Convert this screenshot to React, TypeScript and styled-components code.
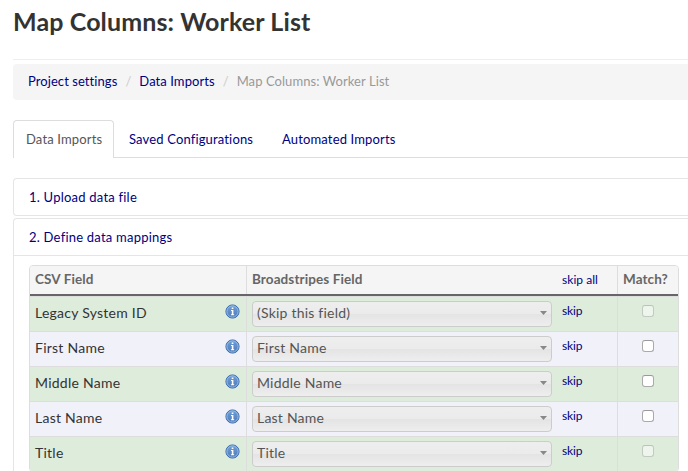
import React from "react";
import styled, { createGlobalStyle } from "styled-components";

const GlobalStyle = createGlobalStyle`
  * { box-sizing: border-box; }
  html, body { margin: 0; background: #fff; }
  body {
    width: 688px;
    height: 471px;
    overflow: hidden;
    color: #333;
    font: 13px/20px Lato, "Open Sans", sans-serif;
  }
`;

const Page = styled.main`
  height: 471px;
  padding-left: 13px;
  overflow: hidden;
`;

const Title = styled.h1`
  margin: 0;
  height: 60px;
  padding-top: 1px;
  border-bottom: 1px solid #eee;
  font-size: 25px;
  font-weight: 700;
  line-height: 40px;
  letter-spacing: 0.12px;
  white-space: nowrap;
`;

const Link = styled.a`
  color: #000080;
  text-decoration: none;
  white-space: nowrap;
`;

const Breadcrumb = styled.nav`
  display: flex;
  align-items: center;
  height: 36px;
  margin-top: 4px;
  padding: 0 15px 2px;
  background: #f5f5f5;
  border-radius: 4px 0 0 4px;
  letter-spacing: 0.07px;
`;

const Separator = styled.span`
  width: 22px;
  text-align: center;
  color: #ccc;
`;

const Current = styled.span`
  color: #999;
`;

const Tabs = styled.div`
  display: flex;
  height: 38px;
  margin-top: 20px;
  box-shadow: inset 0 -1px #ddd;
`;

const Tab = styled.a<{ $active?: boolean; $width: number }>`
  width: ${(p) => p.$width}px;
  margin-right: 2px;
  padding: 8px 0 0 12px;
  border: 1px solid ${(p) => (p.$active ? "#ddd" : "transparent")};
  border-bottom: 0;
  border-radius: 4px 4px 0 0;
  background: ${(p) => (p.$active ? "#fff" : "transparent")};
  color: ${(p) => (p.$active ? "#555" : "#000080")};
  letter-spacing: 0.15px;
  white-space: nowrap;
`;

const Panel = styled.section<{ $top: number; $open?: boolean }>`
  margin-top: ${(p) => p.$top}px;
  height: ${(p) => (p.$open ? "300px" : "38px")};
  border: 1px solid #e5e5e5;
  border-right: 0;
  border-radius: 4px 0 0 4px;
`;

const PanelHeading = styled.div<{ $open?: boolean }>`
  height: ${(p) => (p.$open ? 37 : 36)}px;
  padding: 8px 15px;
  border-bottom: ${(p) => (p.$open ? "1px solid #e5e5e5" : "0")};
  letter-spacing: 0.22px;
`;

const Table = styled.div`
  width: 650px;
  margin: 9px 0 0 15px;
  border: 1px solid #ddd;
  border-radius: 4px;
  overflow: hidden;
`;

const HeaderRow = styled.div`
  display: grid;
  grid-template-columns: 216px 371px 61px;
  height: 30px;
  background: #f5f5f5;
  border-bottom: 2px solid #666;
  color: #666;
  font-size: 13.5px;
  font-weight: 700;
  letter-spacing: 0.1px;
`;

const Row = styled.div<{ $green: boolean }>`
  display: grid;
  grid-template-columns: 216px 371px 61px;
  height: 35px;
  background: ${(p) => (p.$green ? "#deecdc" : "#f1f1fa")};
  border-top: 1px solid #ddd;
`;

const Cell = styled.div`
  display: flex;
  align-items: center;
  padding-left: 5px;
  & + & { border-left: 1px solid #ddd; }
`;

const HeaderCell = styled(Cell)`
  padding-bottom: 2px;
`;

const FieldName = styled.span`
  flex: 1;
  margin-top: -3px;
  font-size: 14px;
  letter-spacing: 0.25px;
`;

const Info = styled.svg`
  width: 15px;
  height: 15px;
  margin: -6px 6px 0 0;
`;

const Select = styled.button`
  display: flex;
  align-items: center;
  justify-content: space-between;
  width: 300px;
  height: 26px;
  padding: 0 4px 2px 4px;
  border: 1px solid #ccc;
  border-radius: 4px;
  background: linear-gradient(#eee 0%, #ebebeb 48%, #e4e4e4 52%, #eee 100%);
  color: #555;
  font: 14px/20px Lato, "Open Sans", sans-serif;
  letter-spacing: 0.22px;
`;

const Arrow = styled.svg`
  width: 7px;
  height: 4px;
  margin-top: -1px;
`;

const Skip = styled(Link)<{ $header?: boolean }>`
  margin: ${(p) => (p.$header ? "2px 0 0 auto" : "-6px 0 0 10px")};
  padding-right: ${(p) => (p.$header ? 19 : 0)}px;
  font-size: 12px;
  font-weight: 400;
  letter-spacing: ${(p) => (p.$header ? 0.05 : -0.1)}px;
`;

const MatchCell = styled(Cell)`
  justify-content: center;
  && { padding: 0 0 6px; border-left: 1px solid #ddd; }
`;

const Checkbox = styled.input`
  appearance: none;
  width: 12px;
  height: 12px;
  margin: 0;
  border: 1px solid #aaa;
  border-top-color: #999;
  border-radius: 3px;
  background: #fff;
  &:disabled { opacity: 0.5; }
`;

const InfoIcon = () => (
  <Info viewBox="0 0 15 15">
    <defs>
      <linearGradient id="infoFill" x2="0" y2="1">
        <stop stopColor="#6fa0d6" />
        <stop offset="1" stopColor="#4c79b9" />
      </linearGradient>
    </defs>
    <circle cx="7.5" cy="7.5" r="6.6" fill="url(#infoFill)" stroke="#3c6cb0" />
    <circle cx="7.5" cy="7.5" r="5.6" fill="none" stroke="#a7c6e8" strokeWidth=".8" />
    <path d="M6.7 3.4h1.7v1.5H6.7zM6 6.1h2.4v4.2h.8v.9H5.9v-.9h.9V7H6z" fill="#fff" />
  </Info>
);

const fields = [
  { name: "Legacy System ID", target: "(Skip this field)", disabled: true },
  { name: "First Name", target: "First Name" },
  { name: "Middle Name", target: "Middle Name" },
  { name: "Last Name", target: "Last Name" },
  { name: "Title", target: "Title", disabled: true },
];

export default function App() {
  return (
    <>
      <GlobalStyle />
      <Page>
        <Title>Map Columns: Worker List</Title>
        <Breadcrumb>
          <Link>Project settings</Link>
          <Separator>/</Separator>
          <Link>Data Imports</Link>
          <Separator>/</Separator>
          <Current>Map Columns: Worker List</Current>
        </Breadcrumb>
        <Tabs>
          <Tab $active $width={101}>Data Imports</Tab>
          <Tab $width={151}>Saved Configurations</Tab>
          <Tab $width={140}>Automated Imports</Tab>
        </Tabs>
        <Panel $top={20}>
          <PanelHeading><Link>1. Upload data file</Link></PanelHeading>
        </Panel>
        <Panel $top={2} $open>
          <PanelHeading $open><Link>2. Define data mappings</Link></PanelHeading>
          <Table>
            <HeaderRow>
              <HeaderCell>CSV Field</HeaderCell>
              <HeaderCell>Broadstripes Field<Skip $header>skip all</Skip></HeaderCell>
              <HeaderCell>Match?</HeaderCell>
            </HeaderRow>
            {fields.map((f, i) => (
              <Row key={f.name} $green={i % 2 === 0}>
                <Cell><FieldName>{f.name}</FieldName><InfoIcon /></Cell>
                <Cell>
                  <Select>
                    {f.target}
                    <Arrow viewBox="0 0 7 4"><path d="M0 0h7L3.5 4z" fill="#888" /></Arrow>
                  </Select>
                  <Skip>skip</Skip>
                </Cell>
                <MatchCell><Checkbox type="checkbox" disabled={f.disabled} /></MatchCell>
              </Row>
            ))}
          </Table>
        </Panel>
      </Page>
    </>
  );
}
